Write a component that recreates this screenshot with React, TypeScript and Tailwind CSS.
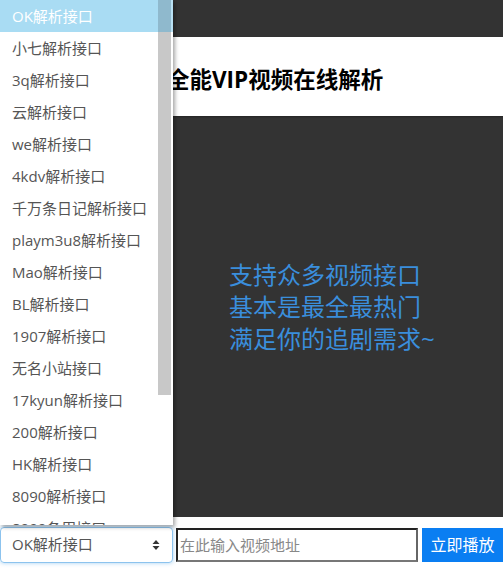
import { useState } from "react";

const apis = [
  "OK解析接口",
  "小七解析接口",
  "3q解析接口",
  "云解析接口",
  "we解析接口",
  "4kdv解析接口",
  "千万条日记解析接口",
  "playm3u8解析接口",
  "Mao解析接口",
  "BL解析接口",
  "1907解析接口",
  "无名小站接口",
  "17kyun解析接口",
  "200解析接口",
  "HK解析接口",
  "8090解析接口",
  "8090备用接口",
];

const font = { fontFamily: '"Open Sans", "Noto Sans CJK SC", sans-serif' };

const App = () => {
  const [selected] = useState(0);

  return (
    <div className="relative w-full h-[572px] bg-[#333] flex flex-col overflow-hidden" style={font}>
      <div className="h-[37px] shrink-0" />

      {/* Header */}
      <div className="h-[79px] shrink-0 bg-white flex items-center pl-[167px] pt-[7px] shadow-[0_1px_2px_rgba(0,0,0,0.3)]">
        <h1 className="text-[22.5px] font-bold text-black">全能VIP视频在线解析</h1>
      </div>

      {/* Player area */}
      <div className="flex-1 flex items-center pl-[229px] pb-[20px]">
        <div className="text-[24px] leading-[32px] text-[#3a8edc]">
          <p>支持众多视频接口</p>
          <p>基本是最全最热门</p>
          <p>满足你的追剧需求~</p>
        </div>
      </div>

      {/* Bottom bar */}
      <div className="h-[55px] shrink-0 bg-white flex items-center gap-[3px]">
        <div className="w-[173px] h-[36px] shrink-0 rounded-[4px] border border-[#8cc3ee] shadow-[0_0_4px_rgba(102,175,233,0.6)] flex items-center justify-between pl-[11px] pr-[12px] text-[15px] text-[#555]">
          <span>{apis[selected]}</span>
          <svg width="8" height="12" viewBox="0 0 8 12">
            <path d="M4 1 L7.5 5 H0.5 Z" fill="#333" />
            <path d="M4 11 L7.5 7 H0.5 Z" fill="#333" />
          </svg>
        </div>
        <input
          className="w-[242px] h-[34px] shrink-0 border-2 border-t-[#222] border-l-[#222] border-r-[#666] border-b-[#777] px-[2px] text-[15px] text-[#333] placeholder:text-[#888] outline-none"
          placeholder="在此输入视频地址"
        />
        <button className="ml-[1px] flex-1 h-[34px] bg-[#0a7ef2] text-white text-[16px]">立即播放</button>
      </div>

      {/* Open select list */}
      <div className="absolute left-0 top-0 w-[173px] h-[525px] bg-white shadow-[2px_2px_4px_rgba(0,0,0,0.35)] overflow-hidden flex">
        <ul className="w-[158px] shrink-0">
          {apis.map((name, i) => (
            <li
              key={name}
              className={`h-[32px] flex items-center pl-[12px] text-[15px] whitespace-nowrap ${
                i === selected ? "bg-[#a9dcf3] text-white" : "text-[#555]"
              }`}
            >
              {name}
            </li>
          ))}
        </ul>
        <div className="w-[15px] shrink-0 flex flex-col">
          <div className="flex">
            <div className="w-[13px] flex flex-col">
              <div className="h-[32px] bg-[#8fb9cd]" />
              <div className="h-[363px] bg-[#c8c8c8]" />
            </div>
            <div className="w-[2px] h-[32px] bg-[#b8e0f3]" />
          </div>
        </div>
      </div>
    </div>
  );
};

export default App;
